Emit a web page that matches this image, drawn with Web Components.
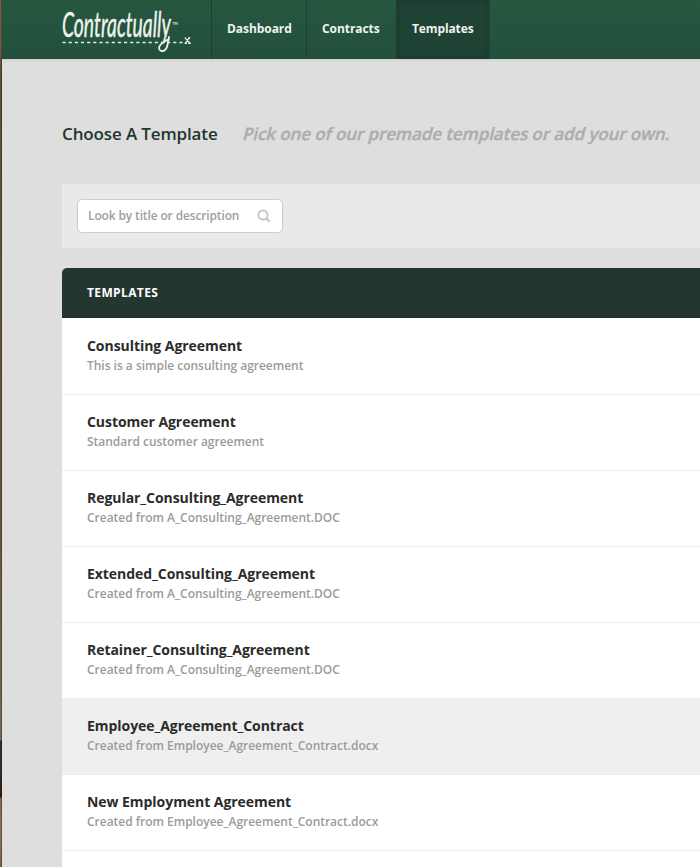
<!DOCTYPE html>
<html lang="en">
<head>
<meta charset="utf-8">
<title>Contractually – Templates</title>
<style>
html,body{margin:0;height:100%;overflow:hidden;background:#dedede}
body{font-family:"Open Sans","Noto Sans",sans-serif}
</style>
</head>
<body>
<app-shell>
  <top-bar slot="header">
    <brand-logo slot="brand"></brand-logo>
    <nav-item>Dashboard</nav-item>
    <nav-item>Contracts</nav-item>
    <nav-item active>Templates</nav-item>
  </top-bar>
  <page-title>Choose A Template<span slot="hint">Pick one of our premade templates or add your own.</span></page-title>
  <filter-bar><search-field>Look by title or description</search-field></filter-bar>
  <template-list>
    <span slot="heading">TEMPLATES</span>
    <template-row>Consulting Agreement<span slot="note">This is a simple consulting agreement</span></template-row>
    <template-row>Customer Agreement<span slot="note">Standard customer agreement</span></template-row>
    <template-row>Regular_Consulting_Agreement<span slot="note">Created from A_Consulting_Agreement.DOC</span></template-row>
    <template-row>Extended_Consulting_Agreement<span slot="note">Created from A_Consulting_Agreement.DOC</span></template-row>
    <template-row>Retainer_Consulting_Agreement<span slot="note">Created from A_Consulting_Agreement.DOC</span></template-row>
    <template-row selected>Employee_Agreement_Contract<span slot="note">Created from Employee_Agreement_Contract.docx</span></template-row>
    <template-row>New Employment Agreement<span slot="note">Created from Employee_Agreement_Contract.docx</span></template-row>
  </template-list>
</app-shell>
<script>
const define = (name, markup) => {
  const t = document.createElement('template');
  t.innerHTML = markup;
  customElements.define(name, class extends HTMLElement {
    constructor() {
      super();
      this.attachShadow({mode: 'open'}).append(t.content.cloneNode(true));
    }
  });
};

define('app-shell', `<style>
:host{display:grid;grid-template-columns:2px 1fr;height:100vh;overflow:hidden}
.edge{background:linear-gradient(90deg,transparent 1px,rgba(40,32,24,.4) 1px),linear-gradient(#75604c 0,#75604c 50px,#5c4d3d 70px,#65543f 500px,#77685a 740px,#30252b 741px,#352a2d 770px,#2d1b0c 797px,#86694a 798px,#85765f 835px,#806142 867px)}
.app{min-width:0;background:#dedede}
main{padding:0 0 0 60px}
</style><div class="edge"></div><div class="app"><slot name="header"></slot><main><slot></slot></main></div>`);

define('top-bar', `<style>
:host{display:flex;height:59px;background:linear-gradient(#26573f,#22503c);box-shadow:0 1px 3px rgba(0,0,0,.09);position:relative}
.brand{width:209px;flex:none}
nav{display:flex}
</style><div class="brand"><slot name="brand"></slot></div><nav><slot></slot></nav>`);

define('nav-item', `<style>
:host{display:flex;box-sizing:border-box;width:95px;height:59px;padding:0 0 2px 15px;align-items:center;border-left:1px solid #203d30;color:#eef3ef;font-size:12px;font-weight:700;letter-spacing:-.06px;white-space:nowrap}
:host(:nth-of-type(2)){width:90px}
:host([active]){width:94px;border-right:1px solid #25483a;background:#1e4233;box-shadow:inset 0 0 5px rgba(0,0,0,.2);letter-spacing:-.12px}
</style><slot></slot>`);

define('brand-logo', `<style>
:host{display:block}
svg{display:block}
text{font-family:Lato,sans-serif;fill:#eef2ec}
</style><svg width="209" height="59" viewBox="2 0 209 59">
<text transform="translate(62 37) scale(.57 1.03)" font-size="34" font-style="italic" stroke="#eef2ec" stroke-width=".4" stroke-linejoin="round" vector-effect="non-scaling-stroke">Contractually</text>
<path d="M62.5 42.5H183" stroke="#e4ece4" stroke-width="1.3" stroke-dasharray="3.2 2.95" fill="none"/>
<path d="M169 39C165.500 41 159 44 159 48C159.500 52.500 166 52.500 167.500 45L169 37" stroke="#eef2ec" stroke-width="1.8" fill="none" stroke-linecap="round"/>
<path d="M185.200 38.200L190 43M189.700 37.600L185.200 43.200M184.600 43.300H187M188.200 43.300H190.800M188.400 37.700H190.200M184.600 38H186.300" stroke="#eef2ec" stroke-width="1.200" fill="none"/>
<text x="172.500" y="24.500" font-size="3.400" font-weight="700">TM</text>
</svg>`);

define('page-title', `<style>
:host{display:flex;align-items:baseline;height:125px;box-sizing:border-box;padding-top:63px;font-size:17px;font-weight:600;line-height:24px;letter-spacing:-.13px;color:#22362e;white-space:nowrap}
h1{font:inherit;margin:0;width:180px;flex:none}
.hint{display:block;color:#adadad;letter-spacing:-.1px;-webkit-text-stroke:.35px #adadad;transform:skewX(-14deg);transform-origin:0 18px}
</style><h1><slot></slot></h1><div class="hint"><slot name="hint"></slot></div>`);

define('filter-bar', `<style>
:host{display:flex;height:64px;box-sizing:border-box;padding:15px;background:#e9e9e9}
</style><slot></slot>`);

define('search-field', `<style>
:host{display:flex;align-items:center;justify-content:space-between;box-sizing:border-box;width:206px;height:34px;padding:0 11px 1px 10px;border:1px solid #cbcbcb;border-radius:5px;background:#fff;color:#a0a09d;font-size:12px;font-weight:600;letter-spacing:-.14px;white-space:nowrap}
svg{flex:none;margin-top:1px}
</style><span><slot></slot></span><svg width="14" height="14" viewBox="0 0 14 14" fill="none" stroke="#c9c9c9"><circle cx="6" cy="6" r="4.600" stroke-width="2"/><path d="M9.500 9.500L12.800 12.800" stroke-width="2.300"/></svg>`);

define('template-list', `<style>
:host{display:block;margin-top:20px;background:#fff;border-radius:5px 0 0 0;overflow:hidden;height:640px}
header{height:50px;box-sizing:border-box;padding:0 25px;display:flex;align-items:center;background:#253630;border-bottom:1px solid #1e2d27;color:#fff;font-size:12px;font-weight:700;letter-spacing:.38px}
.rows{padding-top:1px}
</style><header><slot name="heading"></slot></header><div class="rows"><slot></slot></div>`);

define('template-row', `<style>
:host{display:block;box-sizing:border-box;height:76px;padding:17px 25px 0;border-bottom:1px solid #eee;color:#2b2b2b;white-space:nowrap}
:host([selected]){background:#efefef}
.title{font-size:14px;font-weight:700;line-height:20px;letter-spacing:-.05px}
.note{font-size:12px;font-weight:600;line-height:20px;letter-spacing:-.02px;color:#9b9b98}
</style><div class="title"><slot></slot></div><div class="note"><slot name="note"></slot></div>`);
</script>
</body>
</html>
